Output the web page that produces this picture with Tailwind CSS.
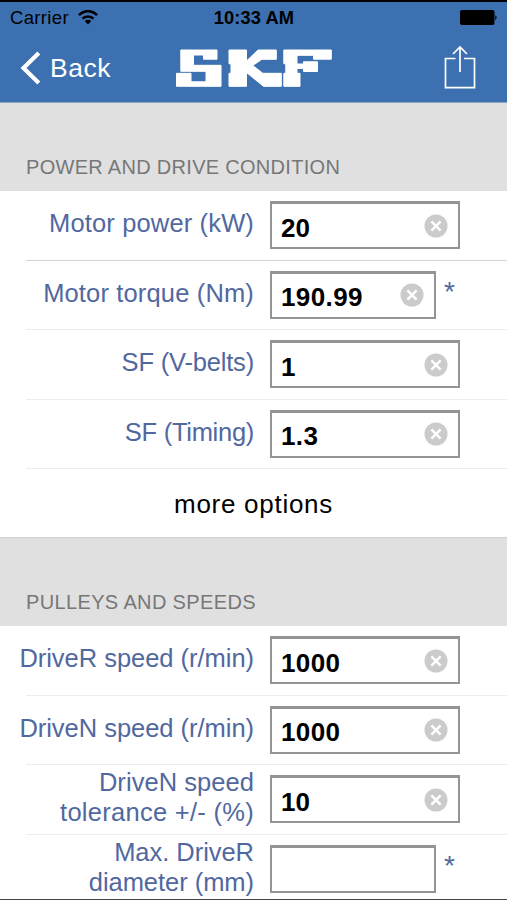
<!DOCTYPE html>
<html lang="en">
<head>
<meta charset="utf-8">
<title>SKF</title>
<script src="https://cdn.jsdelivr.net/npm/@tailwindcss/browser@4"></script>
</head>
<body class="w-[507px] h-[900px] overflow-hidden bg-white font-['Liberation_Sans',Arial,sans-serif] text-[#51689f]">
<svg class="hidden">
  <symbol id="clear" viewBox="0 0 24 24"><circle cx="12" cy="12" r="11.5" fill="#cbcbcb"/><path d="M7.4 7.4l9.2 9.2M16.6 7.4l-9.2 9.2" stroke="#fff" stroke-width="2.5"/></symbol>
</svg>
<div class="relative flex h-[900px] flex-col border-t-2 border-black">
  <header class="h-[101px] shrink-0 border-b border-[#8ca5c6] bg-[#3c70b0]">
    <div class="grid h-[32px] grid-cols-3 items-center pl-[10px] pr-[9px] text-black">
      <div class="flex items-center gap-[9px]">
        <span class="text-[18.5px] tracking-[0.35px]">Carrier</span>
        <svg class="-mt-[2px] h-[15px] w-[20px]" viewBox="0 0 20 15" fill="none" stroke="#000" stroke-width="2.5"><path d="M1 5.1C6.200-.2 13.800-.2 19 5.100M4.500 8.700C7.600 5.600 12.400 5.600 15.500 8.700"/><path d="M6.700 10.900C8.600 9.200 11.400 9.200 13.300 10.900L10 14.500z" fill="#000" stroke="none"/></svg>
      </div>
      <span class="whitespace-nowrap text-center text-[18.300px] font-bold tracking-[0.100px]">10:33 AM</span>
      <svg class="-mt-px h-[15px] w-[38px] justify-self-end" viewBox="0 0 38 15"><rect width="34.500" height="15" rx="2" fill="#000"/><path d="M35.300 5q2.700 2.500 0 5z" fill="#000"/></svg>
    </div>
    <div class="flex h-[68px] items-center text-white">
      <svg class="ml-[20px] h-[34px] w-[22px]" viewBox="0 0 22 34" fill="none" stroke="#fff" stroke-width="4.200"><path d="M18.800 2L3.500 17l15.300 15"/></svg>
      <span class="ml-[8px] mt-[1px] w-[62px] text-[26.500px] tracking-[0.550px]">Back</span>
      <svg class="-mt-[3px] ml-[63px] h-[40px] w-[157px]" viewBox="0 0 157 40" fill="#fff" stroke="#fff" stroke-linejoin="round" stroke-width="1"><path d="M5.800 3H42V12.200H28.500V8H18.500V18.300H46V39.300H1.500V26.300H16V34.800H31V24.300H5.800z"/><path d="M54 3H71.500V14L83 3H101.300V12.300H86.800L77.800 18.500L87.800 26.300H106.300V39.300H88.500L71.500 25.500V39.300H54V26.300H56V16.800H54z"/><path d="M108.800 3H156.300V12.200H138.500V8.300H122V17H128.500V14.800H142.500V24.500H128.500V21.500H122V26.300H125V39.300H108.800V26.300H110.800V16.800H108.800z"/></svg>
      <svg class="-mt-[3px] ml-[112px] h-[44px] w-[32px]" viewBox="0 0 32 44" fill="none" stroke="#fff" stroke-width="1.700"><path d="M11.500 13.500H1.500V42.700H30.500V13.500H20M16 27V2M9 9l7-7 7 7"/></svg>
    </div>
  </header>
  <h2 class="h-[88px] shrink-0 bg-[#e0e0e0] pl-[26px] pt-[52px] text-[20px] leading-[24px] tracking-[0.300px] text-[#777]">POWER AND DRIVE CONDITION</h2>
  <main class="shrink-0">
    <div class="relative flex h-[69.500px]">
      <div class="flex w-[254px] items-center justify-end whitespace-nowrap pb-[5px] text-right text-[25.500px] leading-[30px] tracking-[0.150px]">Motor power (kW)</div>
      <div class="ml-[16px] mt-[10px] flex h-[48px] w-[190px] items-center justify-between border-2 border-t-3 border-[#949494] pl-[9px] pr-[10px] text-[26px] font-bold text-black"><span class="mt-[5px]">20</span><svg class="size-6"><use href="#clear"/></svg></div>
      <i class="absolute bottom-0 left-[26px] right-0 h-px bg-[#d3d3d3]"></i>
    </div>
    <div class="relative flex h-[69.500px]">
      <div class="flex w-[254px] items-center justify-end whitespace-nowrap pb-[5px] text-right text-[25.500px] leading-[30px] tracking-[0.150px]">Motor torque (Nm)</div>
      <div class="ml-[16px] mt-[10px] flex h-[48px] w-[166px] items-center justify-between border-2 border-t-3 border-[#949494] pl-[9px] pr-[10px] text-[26px] font-bold tracking-[0.400px] text-black"><span class="mt-[5px]">190.99</span><svg class="size-6"><use href="#clear"/></svg></div>
      <span class="ml-[8px] mt-[16px] text-[28px] leading-[30px]">*</span>
      <i class="absolute bottom-0 left-[26px] right-0 h-px bg-[#ececec]"></i>
    </div>
    <div class="relative flex h-[69.500px]">
      <div class="flex w-[254px] items-center justify-end whitespace-nowrap pb-[5px] text-right text-[25.500px] leading-[30px] tracking-[-0.180px]">SF (V-belts)</div>
      <div class="ml-[16px] mt-[10px] flex h-[48px] w-[190px] items-center justify-between border-2 border-t-3 border-[#949494] pl-[9px] pr-[10px] text-[26px] font-bold text-black"><span class="mt-[5px]">1</span><svg class="size-6"><use href="#clear"/></svg></div>
      <i class="absolute bottom-0 left-[26px] right-0 h-px bg-[#ececec]"></i>
    </div>
    <div class="relative flex h-[69.500px]">
      <div class="flex w-[254px] items-center justify-end whitespace-nowrap pb-[5px] text-right text-[25.500px] leading-[30px] tracking-[-0.280px]">SF (Timing)</div>
      <div class="ml-[16px] mt-[10px] flex h-[48px] w-[190px] items-center justify-between border-2 border-t-3 border-[#949494] pl-[9px] pr-[10px] text-[26px] font-bold tracking-[0.400px] text-black"><span class="mt-[5px]">1.3</span><svg class="size-6"><use href="#clear"/></svg></div>
      <i class="absolute bottom-0 left-[26px] right-0 h-px bg-[#ececec]"></i>
    </div>
    <div class="flex h-[68px] items-center justify-center pt-[3px] text-[26px] tracking-[0.720px] text-black">more options</div>
    <h2 class="h-[89px] border-t border-[#d0d0d0] bg-[#e0e0e0] pl-[26px] pt-[52px] text-[20px] leading-[24px] tracking-[0.360px] text-[#777]">PULLEYS AND SPEEDS</h2>
    <div class="relative flex h-[69.500px]">
      <div class="flex w-[254px] items-center justify-end whitespace-nowrap pb-[5px] text-right text-[25.500px] leading-[30px] tracking-[-0.030px]">DriveR speed (r/min)</div>
      <div class="ml-[16px] mt-[10px] flex h-[48px] w-[190px] items-center justify-between border-2 border-t-3 border-[#949494] pl-[9px] pr-[10px] text-[26px] font-bold tracking-[0.400px] text-black"><span class="mt-[5px]">1000</span><svg class="size-6"><use href="#clear"/></svg></div>
      <i class="absolute bottom-0 left-[26px] right-0 h-px bg-[#ececec]"></i>
    </div>
    <div class="relative flex h-[69.500px]">
      <div class="flex w-[254px] items-center justify-end whitespace-nowrap pb-[5px] text-right text-[25.500px] leading-[30px] tracking-[-0.030px]">DriveN speed (r/min)</div>
      <div class="ml-[16px] mt-[10px] flex h-[48px] w-[190px] items-center justify-between border-2 border-t-3 border-[#949494] pl-[9px] pr-[10px] text-[26px] font-bold tracking-[0.400px] text-black"><span class="mt-[5px]">1000</span><svg class="size-6"><use href="#clear"/></svg></div>
      <i class="absolute bottom-0 left-[26px] right-0 h-px bg-[#ececec]"></i>
    </div>
    <div class="relative flex h-[69.500px]">
      <div class="flex w-[254px] flex-col items-end justify-center whitespace-nowrap pb-[5px] text-[25.500px] leading-[30px]"><span class="tracking-[0.050px]">DriveN speed</span><span class="tracking-[0.280px]">tolerance +/- (%)</span></div>
      <div class="ml-[16px] mt-[10px] flex h-[48px] w-[190px] items-center justify-between border-2 border-t-3 border-[#949494] pl-[9px] pr-[10px] text-[26px] font-bold text-black"><span class="mt-[5px]">10</span><svg class="size-6"><use href="#clear"/></svg></div>
      <i class="absolute bottom-0 left-[26px] right-0 h-px bg-[#ececec]"></i>
    </div>
    <div class="relative flex h-[69.500px]">
      <div class="flex w-[254px] flex-col items-end justify-center whitespace-nowrap pb-[5px] text-[25.500px] leading-[30px] tracking-[-0.040px]"><span>Max. DriveR</span><span>diameter (mm)</span></div>
      <div class="ml-[16px] mt-[10px] h-[48px] w-[166px] border-2 border-t-3 border-[#949494]"></div>
      <span class="ml-[8px] mt-[16px] text-[28px] leading-[30px]">*</span>
    </div>
  </main>
  <i class="absolute bottom-0 left-0 h-px w-full bg-[#444]"></i>
</div>
</body>
</html>
